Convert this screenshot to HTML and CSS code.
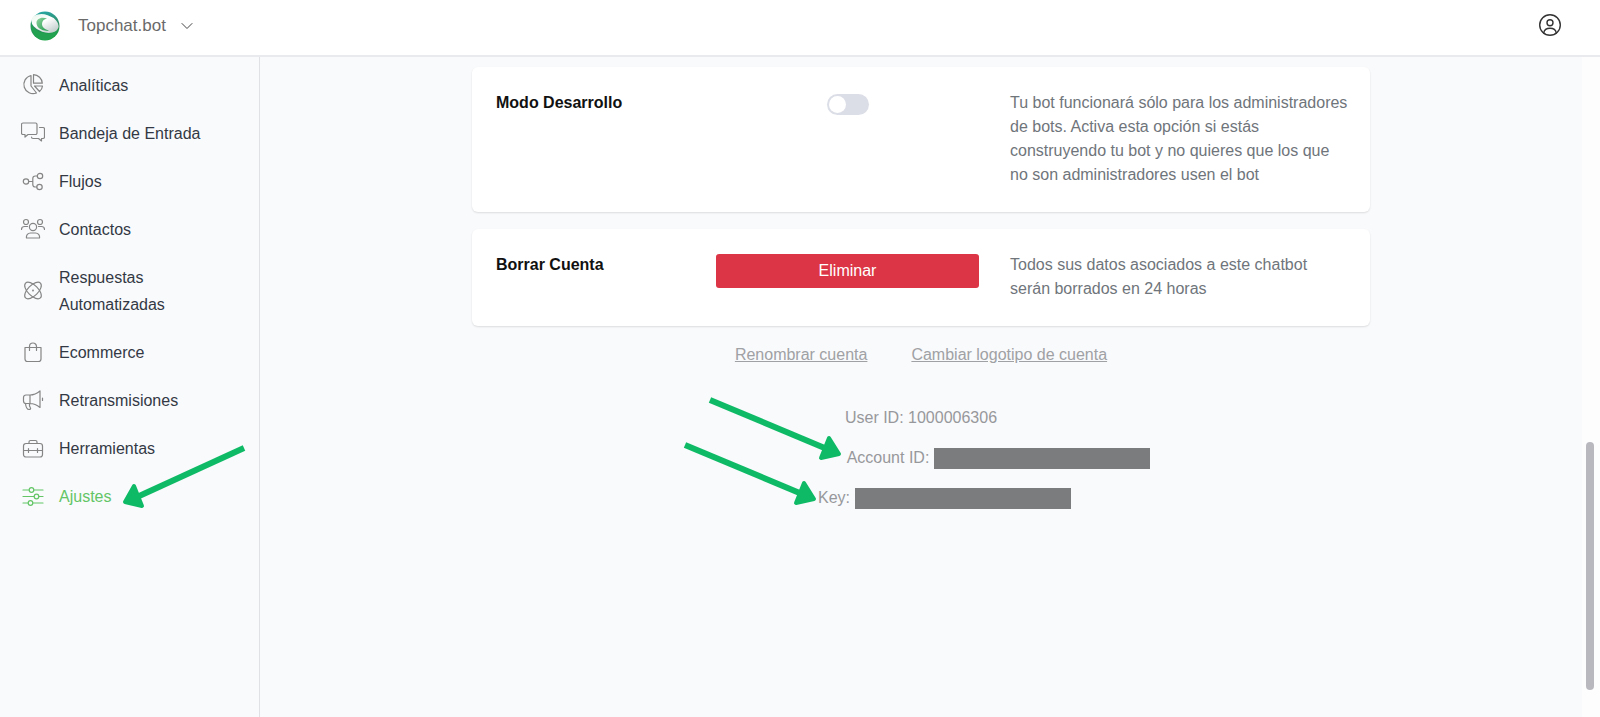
FILE: index.html
```html
<!DOCTYPE html>
<html lang="es">
<head>
    <meta charset="UTF-8">
    <meta name="viewport" content="width=device-width, initial-scale=1.0">
    <title>Ajustes</title>
    <link rel="stylesheet" href="styles.css">
</head>
<body>
    <!-- Top Bar -->
    <header class="topbar">
        <button class="account-switch" type="button">
            <svg class="logo" viewBox="0 0 30 30" aria-hidden="true">
                <defs>
                    <linearGradient id="ball" x1="0.4" y1="0" x2="0.6" y2="1">
                        <stop offset="0" stop-color="#2aa6a4"/>
                        <stop offset="0.5" stop-color="#2f8b62"/>
                        <stop offset="1" stop-color="#12a63c"/>
                    </linearGradient>
                    <linearGradient id="shine" x1="0" y1="0" x2="1" y2="0.6">
                        <stop offset="0" stop-color="#e6f5ea"/>
                        <stop offset="0.5" stop-color="#ffffff"/>
                        <stop offset="1" stop-color="#c3cfcd"/>
                    </linearGradient>
                    <linearGradient id="swirl" x1="0" y1="0" x2="1" y2="1">
                        <stop offset="0" stop-color="#8fd3a0"/>
                        <stop offset="1" stop-color="#1f9a4a"/>
                    </linearGradient>
                </defs>
                <circle cx="15" cy="15" r="14.5" fill="url(#ball)"/>
                <ellipse cx="15" cy="12.500" rx="14" ry="8.800" transform="rotate(18 15 12.500)" fill="url(#shine)"/>
                <path d="M17 7.500C11 5.500 6 8 6.500 12.500C7 17.500 13 20.500 19 19.500C14.500 18.500 12 16 12 13C12 10 14 8 17 7.500Z" fill="url(#swirl)"/>
                <path d="M1 9.500C1 15 5 19.500 11 21.500C17 23.500 24 23 28 19C24 28 17 29.500 13 29C5 28 0 20 1 9.500Z" fill="#22a250"/>
            </svg>
            <span>Topchat.bot</span>
            <svg class="chevron" viewBox="0 0 12 12" aria-hidden="true"><path d="M1 3.500l5 5 5-5"/></svg>
        </button>
        <button class="profile" type="button" aria-label="Perfil">
            <svg viewBox="0 0 24 24" aria-hidden="true">
                <circle cx="12" cy="11" r="10.300"/>
                <circle cx="12" cy="8.800" r="3"/>
                <path d="M5.700 19c.5-3 3-4.700 6.300-4.700s5.800 1.700 6.300 4.700"/>
            </svg>
        </button>
    </header>

    <div class="layout">
        <!-- Sidebar -->
        <nav class="sidebar">
            <a href="#">
                <svg viewBox="0 0 24 24"><path d="M10 1.500A9.200 9.200 0 1 0 15.500 19L10 12Z"/><path d="M12.500 .7v8.500h8.800a9 9 0 0 0-8.800-8.500Z"/><path d="M13.500 12h8a8 8 0 0 1-3 5.500Z"/></svg>
                <span>Analíticas</span>
            </a>
            <a href="#">
                <svg viewBox="0 0 24 24"><path d="M2 1h12.500A1.500 1.500 0 0 1 16 2.500V11a1.500 1.500 0 0 1-1.500 1.500H7l-3 2.500v-2.500H2A1.500 1.500 0 0 1 .5 11V2.500A1.500 1.500 0 0 1 2 1Z"/><path d="M18.500 5.500H22A1.500 1.500 0 0 1 23.500 7v8a1.500 1.500 0 0 1-1.500 1.500h-1.500V19L17.500 16.500H12a1.500 1.500 0 0 1-1.500-1.500"/></svg>
                <span>Bandeja de Entrada</span>
            </a>
            <a href="#">
                <svg viewBox="0 0 24 24"><circle cx="5" cy="11.500" r="2.700"/><circle cx="19" cy="6" r="2.700"/><circle cx="18.500" cy="17" r="2.700"/><path d="M7.700 11.500h4M16.300 6h-2a2.500 2.500 0 0 0-2.500 2.500v6a2.500 2.500 0 0 0 2.500 2.500h1.500"/></svg>
                <span>Flujos</span>
            </a>
            <a href="#">
                <svg viewBox="0 0 24 24"><circle cx="12" cy="9" r="3.600"/><circle cx="5" cy="4" r="2.500"/><circle cx="19" cy="4" r="2.500"/><path d="M5.500 20c-.5-3 1.500-5 4-5h5c2.500 0 4.500 2 4 5ZM.5 11.500c0-2 1.500-3 3-3h3M23.500 11.500c0-2-1.500-3-3-3h-3"/></svg>
                <span>Contactos</span>
            </a>
            <a href="#">
                <svg viewBox="0 0 24 24"><ellipse cx="12" cy="11.500" rx="10.500" ry="5.200" transform="rotate(45 12 11.500)"/><ellipse cx="12" cy="11.500" rx="10.500" ry="5.200" transform="rotate(-45 12 11.500)"/><circle cx="12" cy="11.500" r=".4"/></svg>
                <span>Respuestas Automatizadas</span>
            </a>
            <a href="#">
                <svg viewBox="0 0 24 24"><path d="M4 6.500h16v11.500a2.500 2.500 0 0 1-2.500 2.500h-11A2.500 2.500 0 0 1 4 18ZM8.500 9.500V5.500a3.500 3.500 0 0 1 7 0v4"/></svg>
                <span>Ecommerce</span>
            </a>
            <a href="#">
                <svg viewBox="0 0 24 24"><path d="M9 6H5a2.500 2.500 0 0 0-2.500 2.500V12A2.500 2.500 0 0 0 5 14.500h4ZM9 6c3.500 0 7-1.500 10-4v16.500c-3-2.500-6.500-4-10-4M4.500 14.500c.3 3 1 6 3.500 6 1.500 0 2-1 1.300-2l-.8-1.500v-2.500M21.500 9v2.500"/></svg>
                <span>Retransmisiones</span>
            </a>
            <a href="#">
                <svg viewBox="0 0 24 24"><path d="M5 6.500h14A2.500 2.500 0 0 1 21.500 9v8.500A2.500 2.500 0 0 1 19 20H5a2.500 2.500 0 0 1-2.500-2.500V9A2.500 2.500 0 0 1 5 6.500ZM8 6.500V5a1.500 1.500 0 0 1 1.500-1.500h5A1.500 1.500 0 0 1 16 5v1.500M2.500 13.500h19M7.500 11.500v4M16.500 11.500v4"/></svg>
                <span>Herramientas</span>
            </a>
            <a href="#" class="active">
                <svg viewBox="0 0 24 24"><path d="M2 5h6M13 5h9M2 11.500h11M18 11.500h4M2 18h5M12 18h10"/><circle cx="10.500" cy="5" r="2.300"/><circle cx="15.500" cy="11.500" r="2.300"/><circle cx="9.500" cy="18" r="2.300"/></svg>
                <span>Ajustes</span>
                <svg class="arrow arrow-nav" viewBox="0 0 126 64" aria-hidden="true"><path class="line" d="M123 3L16 52"/><path class="head" d="M4 57L13 41L21 61Z"/></svg>
            </a>
        </nav>

        <!-- Main Content -->
        <main class="content">
            <section class="card">
                <h2 id="devMode">Modo Desarrollo</h2>
                <input class="toggle" type="checkbox" role="switch" aria-labelledby="devMode">
                <p>Tu bot funcionará sólo para los administradores de bots. Activa esta opción si estás construyendo tu bot y no quieres que los que no son administradores usen el bot</p>
            </section>

            <section class="card">
                <h2>Borrar Cuenta</h2>
                <button class="delete-btn" type="button">Eliminar</button>
                <p>Todos sus datos asociados a este chatbot serán borrados en 24 horas</p>
            </section>

            <div class="account-links">
                <a href="#">Renombrar cuenta</a>
                <a href="#">Cambiar logotipo de cuenta</a>
            </div>

            <div class="ids">
                <div class="id-row">User ID: 1000006306</div>
                <div class="id-row">
                    <svg class="arrow arrow-id" viewBox="0 0 136 64" aria-hidden="true"><path class="line" d="M3 3L120 52"/><path class="head" d="M132 57L122 41L114 61Z"/></svg>
                    <span>Account ID:</span>
                    <span class="value value-id"><span class="mask"></span></span>
                </div>
                <div class="id-row">
                    <svg class="arrow arrow-key" viewBox="0 0 136 64" aria-hidden="true"><path class="line" d="M3 3L120 52"/><path class="head" d="M132 57L122 41L114 61Z"/></svg>
                    <span>Key:</span>
                    <span class="value value-key"><span class="mask"></span></span>
                </div>
            </div>
        </main>

        <!-- Scrollbar -->
        <div class="scroll-track">
            <div class="scroll-thumb"></div>
        </div>
    </div>
</body>
</html>
```

FILE: styles.css
```css
* {
    box-sizing: border-box;
}

body {
    margin: 0;
    height: 100vh;
    display: flex;
    flex-direction: column;
    background-color: #f9fafc;
    color: #333944;
    font-family: "Liberation Sans", Arial, sans-serif;
    font-size: 16px;
    line-height: 24px;
}

svg {
    fill: none;
    stroke: currentColor;
    stroke-linecap: round;
    stroke-linejoin: round;
}

button {
    font: inherit;
    border: none;
    cursor: pointer;
}

/* Top Bar */
.topbar {
    height: 57px;
    flex-shrink: 0;
    display: flex;
    align-items: center;
    justify-content: space-between;
    padding: 0 38px 4px 30px;
    background-color: white;
    border-bottom: 2px solid #e9eaed;
}

.account-switch {
    display: flex;
    align-items: center;
    padding: 0;
    background: none;
    color: #6a6a6a;
    font-size: 17px;
}

.logo {
    width: 30px;
    height: 30px;
    margin-right: 18px;
    stroke: none;
}

.chevron {
    width: 12px;
    height: 12px;
    margin-left: 15px;
    color: #444;
}

.profile {
    display: flex;
    padding: 0;
    background: none;
    color: #333;
}

.profile svg {
    width: 24px;
    height: 24px;
    stroke-width: 1.4;
}

.layout {
    flex: 1;
    min-height: 0;
    display: flex;
}

/* Sidebar */
.sidebar {
    width: 260px;
    flex-shrink: 0;
    padding-top: 5px;
    border-right: 1px solid #dfe1e5;
}

.sidebar a {
    position: relative;
    display: flex;
    align-items: center;
    gap: 14px;
    padding: 10px 40px 11px 21px;
    color: inherit;
    line-height: 27px;
    text-decoration: none;
}

.sidebar svg {
    width: 24px;
    height: 24px;
    flex-shrink: 0;
    color: #858585;
    stroke-width: 1.2;
}

.sidebar .active,
.sidebar .active svg {
    color: #63c566;
}

/* Cards */
.content {
    flex: 1;
    padding: 10px 24px;
}

.card {
    max-width: 898px;
    margin: 0 auto 17px;
    padding: 24px 20px 25px 24px;
    display: grid;
    grid-template-columns: 189fr 263fr 340fr;
    column-gap: 31px;
    align-items: start;
    background-color: white;
    border-radius: 6px;
    box-shadow: 0 1px 2px rgba(0, 0, 0, 0.12);
}

.card h2 {
    margin: 0;
    color: #111;
    font-size: 16px;
    font-weight: bold;
}

.card p {
    margin: 0;
    color: #6f757b;
}

.toggle {
    appearance: none;
    width: 42px;
    height: 21px;
    margin: 3px auto 0;
    padding: 2px;
    border-radius: 11px;
    background-color: #dcdee7;
    cursor: pointer;
}

.toggle::before {
    content: "";
    display: block;
    width: 17px;
    height: 17px;
    border-radius: 50%;
    background-color: white;
}

.toggle:checked {
    background-color: #63c566;
}

.toggle:checked::before {
    margin-left: auto;
}

.delete-btn {
    height: 34px;
    margin-top: 1px;
    padding: 0 12px;
    border-radius: 3px;
    background-color: #dc3545;
    color: white;
}

/* Account Links */
.account-links {
    display: flex;
    justify-content: center;
    gap: 44px;
}

.account-links a {
    color: #a0a1a4;
}

/* Account IDs */
.ids {
    margin-top: 31px;
    display: flex;
    flex-direction: column;
    align-items: center;
    color: #97989b;
}

.id-row {
    position: relative;
    display: flex;
    align-items: center;
    gap: 5px;
    line-height: 40px;
}

.value {
    position: relative;
    height: 21px;
}

.value-id {
    width: 61px;
}

.value-key {
    width: 169px;
}

.mask {
    position: absolute;
    top: 0;
    left: 0;
    width: 216px;
    height: 21px;
    background-color: #7b7c7e;
}

/* Arrows */
.arrow,
.sidebar .active .arrow {
    position: absolute;
    color: #0fba66;
    stroke-width: 6;
    stroke-linecap: butt;
}

.arrow .head {
    fill: currentColor;
    stroke-width: 4;
}

.sidebar .arrow-nav {
    top: -28px;
    left: 121px;
    width: 126px;
    height: 64px;
}

.arrow-id,
.arrow-key {
    right: 100%;
    width: 136px;
    height: 64px;
}

.arrow-id {
    top: -41px;
    margin-right: 4px;
}

.arrow-key {
    top: -36px;
}

/* Scrollbar */
.scroll-track {
    width: 18px;
    flex-shrink: 0;
    display: flex;
    flex-direction: column;
    align-items: center;
    padding-right: 2px;
    background-color: #fdfdfd;
}

.scroll-track::before {
    content: "";
    flex: 385;
}

.scroll-track::after {
    content: "";
    flex: 27;
}

.scroll-thumb {
    flex: 248;
    width: 8px;
    border-radius: 4px;
    background-color: #b9b8be;
}
```
